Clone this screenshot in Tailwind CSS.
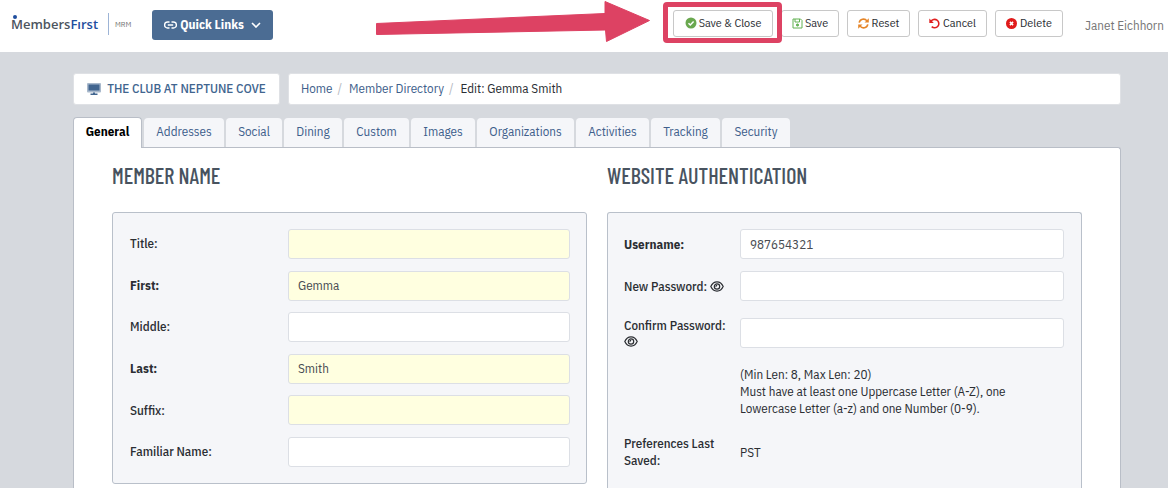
<!DOCTYPE html>
<html lang="en">
<head>
<meta charset="utf-8">
<meta name="viewport" content="width=device-width, initial-scale=1">
<title>Edit: Gemma Smith</title>
<script src="https://cdn.jsdelivr.net/npm/@tailwindcss/browser@4"></script>
</head>
<body class="min-h-screen flex flex-col bg-[#d6d9de] font-['IBM_Plex_Sans_Condensed','Roboto',sans-serif] text-[13px] text-[#2b2e33] overflow-hidden">
<header class="h-[52px] shrink-0 bg-white flex items-start pl-[11px] pr-[2px]">
  <a href="#" class="mt-[13px] flex items-center" aria-label="MembersFirst MRM">
    <span class="relative w-[89px] font-['Open_Sans',sans-serif] font-semibold text-[13px] leading-[22px] text-[#4d5560]">Members<span class="text-[#1f4e9e]">Fırst</span><span class="absolute left-[2px] top-[2px] size-[4px] rounded-full bg-[#1f4e9e]"></span></span>
    <span class="ml-2 h-[22px] w-px bg-[#9db4d6]"></span>
    <span class="ml-[6px] w-[17px] text-[8px] text-[#777]">MRM</span>
  </a>
  <button class="ml-[20px] mt-[10px] h-[30px] w-[121px] rounded-[3px] bg-[#4b6c93] text-white text-[13px] font-bold flex items-center justify-center gap-[3px]">
    <svg class="w-[13px] h-[8px]" viewBox="0 0 13 8" fill="none" stroke="currentColor" stroke-width="1.4"><path d="M5.5 1H3.600a3 3 0 0 0 0 6h1.900M7.500 1h1.900a3 3 0 0 1 0 6H7.500M3.800 4h5.400"/></svg>
    <span>Quick Links</span>
    <svg class="ml-1 w-[10px] h-[6px]" viewBox="0 0 10 6" fill="none" stroke="currentColor" stroke-width="1.600"><path d="M1 1l4 4 4-4"/></svg>
  </button>
  <div class="ml-auto mt-[10px] flex gap-2 text-xs">
    <div class="relative">
      <button class="h-[27px] w-[100px] rounded-[3px] border border-[#c8c8c8] bg-white pb-px flex items-center justify-center gap-[2px]">
        <svg class="size-[12px]" viewBox="0 0 12 12"><circle cx="6" cy="6" r="5.500" fill="#6aa84f"/><path d="M3.500 6.200l1.800 1.800 3.300-3.500" stroke="#fff" stroke-width="1.500" fill="none"/></svg>
        Save &amp; Close</button>
      <span class="absolute -left-[10px] -right-[9px] -top-[8px] -bottom-[6px] rounded-[4px] border-5 border-[#dd4263]"></span>
      <svg class="absolute -top-[10px] right-[122px] w-[276px] h-[44px]" viewBox="375 0 276 44"><path d="M376.500 23.500L605 13.500V1.500L649.500 20.500L606.500 41.500L605.500 30L376.500 34.500Z" fill="#dd4263" stroke="#dd4263" stroke-linejoin="round"/></svg>
    </div>
    <button class="h-[27px] w-[58px] rounded-[3px] border border-[#c8c8c8] bg-white pb-px flex items-center justify-center gap-[2px]">
      <svg class="w-[11px] h-[11px]" viewBox="0 0 11 11" fill="none" stroke="#62b152"><path d="M1 1h7.500L10 2.500V10H1zM3 1v3h4.500V1"/><circle cx="5.500" cy="7" r="1.100" fill="#62b152"/></svg>
      Save</button>
    <button class="h-[27px] w-[63px] rounded-[3px] border border-[#c8c8c8] bg-white pb-px flex items-center justify-center gap-[3px]">
      <svg class="w-[11px] h-[11px]" viewBox="0 0 11 11" fill="none" stroke="#e58528" stroke-width="1.600"><path d="M1.200 4.600A4.300 4.300 0 0 1 8.900 2.900M9.800 6.400A4.300 4.300 0 0 1 2.100 8.100"/><path d="M10.800.3v4.300H6.500zM.2 10.700V6.400h4.300z" fill="#e58528" stroke="none"/></svg>
      Reset</button>
    <button class="h-[27px] w-[69px] rounded-[3px] border border-[#c8c8c8] bg-white pb-px flex items-center justify-center gap-[3px]">
      <svg class="w-[11px] h-[11px]" viewBox="0 0 11 11" fill="none" stroke="#e02020" stroke-width="1.600"><path d="M2 3.500A4.200 4.200 0 1 1 2.700 8.600"/><path d="M.3.400v4.500h4.500z" fill="#e02020" stroke="none"/></svg>
      Cancel</button>
    <button class="h-[27px] w-[68px] rounded-[3px] border border-[#c8c8c8] bg-white pb-px flex items-center justify-center gap-[3px]">
      <svg class="w-[11px] h-[11px]" viewBox="0 0 11 11"><circle cx="5.500" cy="5.500" r="5.500" fill="#e01b1b"/><path d="M3.900 3.900l3.200 3.200M7.100 3.900L3.900 7.100" stroke="#fff" stroke-width="1.500"/></svg>
      Delete</button>
  </div>
  <span class="ml-[22px] mt-[16px] w-[81px] whitespace-nowrap text-[#777]">Janet Eichhorn</span>
</header>

<main class="grow flex flex-col pl-[73px] pr-[47px] pt-[21px]">
  <div class="flex gap-[8px]">
    <a href="#" class="h-[32px] w-[207px] rounded-[3px] border border-[#dfe1e5] bg-white flex items-center justify-center gap-[6px] font-medium text-[#41658f] whitespace-nowrap">
      <svg class="w-[14px] h-[12px] shrink-0" viewBox="0 0 14 12"><rect width="14" height="9.500" rx="1" fill="#a9b9cc"/><rect x="1.500" y="1.500" width="11" height="6" fill="#41658f"/><path d="M6 9.500h2v1h2.500V12h-7v-1.500H6z" fill="#41658f"/></svg>
      THE CLUB AT NEPTUNE COVE</a>
    <nav aria-label="Breadcrumb" class="h-[32px] grow rounded-[3px] border border-[#dfe1e5] bg-white flex items-center pl-[12px]">
      <a href="#" class="text-[#3f5f8c]">Home</a><span class="px-[5px] text-[#b5b9bf]">/</span>
      <a href="#" class="ml-[2px] text-[#3f5f8c]">Member Directory</a><span class="px-[5px] text-[#b5b9bf]">/</span>
      <span class="ml-[2px]">Edit: Gemma Smith</span>
    </nav>
  </div>

  <nav aria-label="Sections" class="relative mt-[12px] -mb-px flex items-end gap-[2px] text-[#3f5f8c] *:flex *:items-center *:justify-center *:rounded-t-[4px] *:pb-[2px]">
    <a href="#" class="h-[31px] w-[69px] border border-b-0 border-[#b9bec7] bg-white font-bold text-black">General</a>
    <a href="#" class="h-[30px] w-[80px] bg-[#f5f6f9] border-b border-[#b9bec7]">Addresses</a>
    <a href="#" class="h-[30px] w-[56px] bg-[#f5f6f9] border-b border-[#b9bec7]">Social</a>
    <a href="#" class="h-[30px] w-[58px] bg-[#f5f6f9] border-b border-[#b9bec7]">Dining</a>
    <a href="#" class="h-[30px] w-[65px] bg-[#f5f6f9] border-b border-[#b9bec7]">Custom</a>
    <a href="#" class="h-[30px] w-[64px] bg-[#f5f6f9] border-b border-[#b9bec7]">Images</a>
    <a href="#" class="h-[30px] w-[97px] bg-[#f5f6f9] border-b border-[#b9bec7]">Organizations</a>
    <a href="#" class="h-[30px] w-[73px] bg-[#f5f6f9] border-b border-[#b9bec7]">Activities</a>
    <a href="#" class="h-[30px] w-[69px] bg-[#f5f6f9] border-b border-[#b9bec7]">Tracking</a>
    <a href="#" class="h-[30px] w-[68px] bg-[#f5f6f9] border-b border-[#b9bec7]">Security</a>
  </nav>

  <div class="grow grid grid-cols-2 gap-[20px] rounded-tr-[3px] border border-b-0 border-[#b9bec7] bg-white px-[38px] pt-[12px]">
    <section>
      <h2 class="font-['Barlow_Condensed','Roboto_Condensed','Liberation_Sans_Narrow','Roboto',sans-serif] text-[22px] font-medium leading-[30px] text-[#48535f]">MEMBER NAME</h2>
      <div class="mt-[22px] rounded-[3px] border border-[#b9c0ca] bg-[#f5f6f9] pl-[17px] pr-[16px] py-[16px]">
        <div class="grid min-h-[238px] grid-cols-[158px_1fr] items-center content-between font-medium">
          <label for="title">Title:</label>
          <input id="title" type="text" class="h-[30px] w-full min-w-0 rounded-[3px] border border-[#dcdfe5] bg-[#ffffe0] px-[9px] font-normal text-[#484c52]">
          <label for="first" class="font-bold">First:</label>
          <input id="first" type="text" value="Gemma" class="h-[30px] w-full min-w-0 rounded-[3px] border border-[#dcdfe5] bg-[#ffffe0] px-[9px] font-normal text-[#484c52]">
          <label for="middle">Middle:</label>
          <input id="middle" type="text" class="h-[30px] w-full min-w-0 rounded-[3px] border border-[#dcdfe5] bg-white px-[9px] font-normal text-[#484c52]">
          <label for="last" class="font-bold">Last:</label>
          <input id="last" type="text" value="Smith" class="h-[30px] w-full min-w-0 rounded-[3px] border border-[#dcdfe5] bg-[#ffffe0] px-[9px] font-normal text-[#484c52]">
          <label for="suffix">Suffix:</label>
          <input id="suffix" type="text" class="h-[30px] w-full min-w-0 rounded-[3px] border border-[#dcdfe5] bg-[#ffffe0] px-[9px] font-normal text-[#484c52]">
          <label for="familiar">Familiar Name:</label>
          <input id="familiar" type="text" class="h-[30px] w-full min-w-0 rounded-[3px] border border-[#dcdfe5] bg-white px-[9px] font-normal text-[#484c52]">
        </div>
      </div>
    </section>

    <section class="flex flex-col">
      <h2 class="font-['Barlow_Condensed','Roboto_Condensed','Liberation_Sans_Narrow','Roboto',sans-serif] text-[22px] font-medium leading-[30px] text-[#48535f]">WEBSITE AUTHENTICATION</h2>
      <div class="mt-[22px] grow rounded-t-[3px] border border-b-0 border-[#b9c0ca] bg-[#f5f6f9] pl-[16px] pr-[17px] pt-[16px]">
        <div class="grid grid-cols-[116px_1fr] items-center font-medium leading-[17px]">
          <label for="user" class="font-bold">Username:</label>
          <input id="user" type="text" value="987654321" class="h-[30px] w-full min-w-0 rounded-[3px] border border-[#dcdfe5] bg-white px-[9px] font-normal text-[#484c52]">
          <div class="mt-[12px] flex items-center gap-[3px] whitespace-nowrap">
            <label for="pw">New Password:</label>
            <button aria-label="Show new password"><svg class="w-[14px] h-[11px]" viewBox="0 0 14 11" fill="none" stroke="#2b2e33" stroke-width="1.200"><path d="M.8 5.500C3.600-.6 10.400-.6 13.200 5.500C10.400 11.600 3.600 11.600.8 5.500Z"/><circle cx="7" cy="5.500" r="2.700"/><path d="M5.900 5.700a1.200 1.200 0 0 1 1.300-1.300"/></svg></button>
          </div>
          <input id="pw" type="password" class="mt-[12px] h-[30px] w-full min-w-0 rounded-[3px] border border-[#dcdfe5] bg-white px-[9px]">
          <div class="mt-[16px] whitespace-nowrap">
            <label for="pw2" class="block">Confirm Password:</label>
            <button class="block h-[15px]" aria-label="Show confirmed password"><svg class="w-[14px] h-[11px]" viewBox="0 0 14 11" fill="none" stroke="#2b2e33" stroke-width="1.200"><path d="M.8 5.500C3.600-.6 10.400-.6 13.200 5.500C10.400 11.600 3.600 11.600.8 5.500Z"/><circle cx="7" cy="5.500" r="2.700"/><path d="M5.900 5.700a1.200 1.200 0 0 1 1.300-1.300"/></svg></button>
          </div>
          <input id="pw2" type="password" class="mt-[16px] h-[30px] w-full min-w-0 rounded-[3px] border border-[#dcdfe5] bg-white px-[9px]">
          <p class="col-start-2 mt-[17px] font-normal">(Min Len: 8, Max Len: 20)<br>Must have at least one Uppercase Letter (A-Z), one<br>Lowercase Letter (a-z) and one Number (0-9).</p>
          <p class="mt-[18px]">Preferences Last<br>Saved:</p>
          <p class="mt-[18px] font-normal">PST</p>
        </div>
      </div>
    </section>
  </div>
</main>
</body>
</html>
